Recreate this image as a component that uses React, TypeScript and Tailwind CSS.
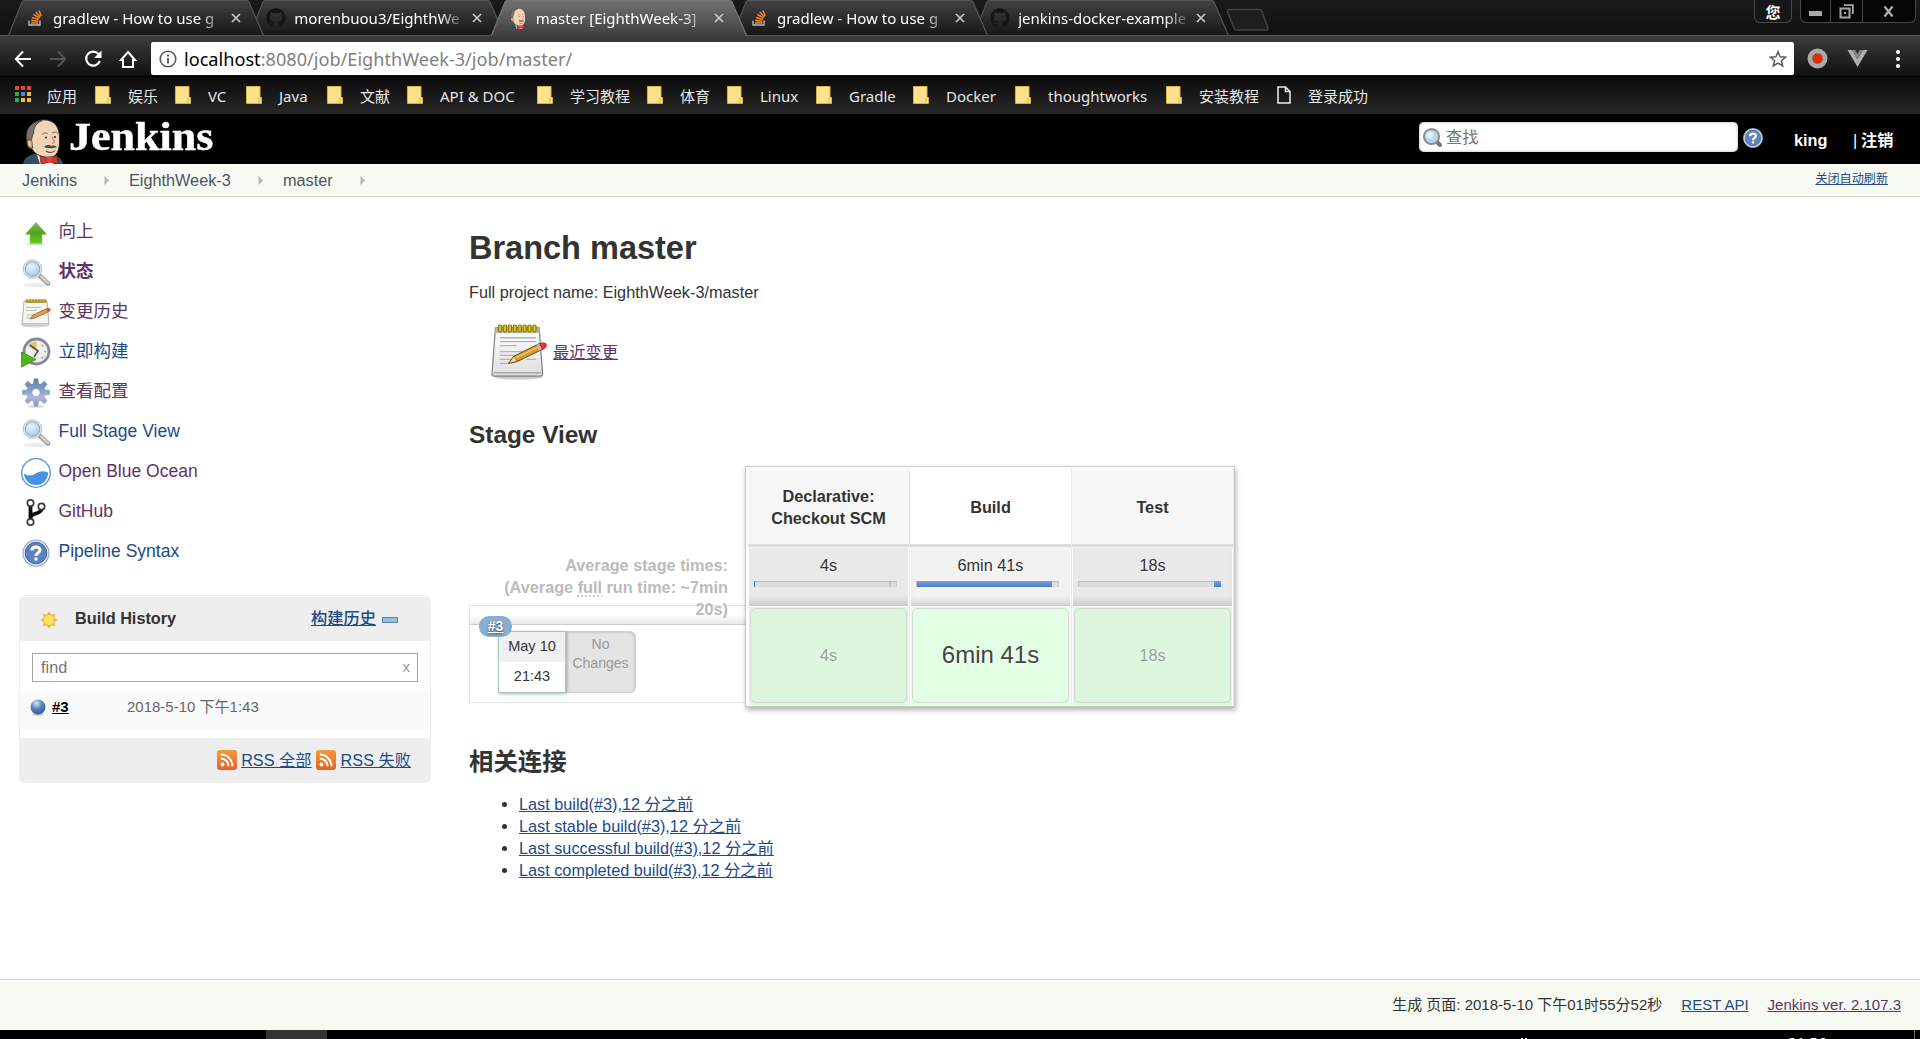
import React from "react";
import { FaGithub } from "react-icons/fa";

const ARIAL = "font-['Liberation_Sans','Noto_Sans_CJK_SC',sans-serif]";
const UI = "font-['Noto_Sans','Noto_Sans_CJK_SC',sans-serif]";

function Butler({ className }: { className?: string }) {
  return (
    <svg className={className} viewBox="0 0 40 45" preserveAspectRatio="none">
      <path d="M0 45 C1 39 5 37 11 35 L30 36 C36 38 39 40 40 45 Z" fill="#335061" />
      <path d="M13 33 L17 45 L30 45 L31 35 Z" fill="#f4f1ec" />
      <path d="M4 24 C1 11 9 1 21 0.8 C32 0.8 37 9 36.500 20 C37 31 34 38 27 38 C20 39 12 36 9 30 C6 30 4 27 4 24 Z" fill="#f0d6b7" stroke="#2b2420" strokeWidth="1" />
      <path d="M4 22 C1 10 9 2 19 1.500 C12 5 11 9 10.500 14 C9 17 9 20 8 22 Z" fill="#77736c" stroke="#2b2420" strokeWidth="0.7" />
      <path d="M4 22 C7 19 10 22 9 26 L10 29 C6 29 4 27 4 22 Z" fill="#e3bd95" stroke="#3a2c24" strokeWidth="0.8" />
      <path d="M19 16 C20 13.500 24 13.500 25 15 M29 14 C31 12.500 34 13 35 14.500" fill="none" stroke="#7a6250" strokeWidth="0.9" />
      <circle cx="23" cy="18.500" r="1" fill="#33251d" />
      <circle cx="32" cy="18" r="1" fill="#33251d" />
      <path d="M29 18 C31 22 33 24 29 24.500" fill="none" stroke="#b08056" strokeWidth="1.1" />
      <path d="M21 28 C24 25 27 26 28.500 27 C31 26 33 27 34 28 C31 29.500 24 30 21 28 Z" fill="#5c4b40" />
      <path d="M23 32 C26 34 30 34 32 31.500" fill="none" stroke="#6d3f33" strokeWidth="1.1" />
      <path d="M17 37 L26 40 L34 36.500 L35 45 L27 43 L18 45 Z" fill="#d33833" stroke="#7c1512" strokeWidth="0.7" />
      <rect x="24.500" y="38.500" width="4" height="5" fill="#ef3d3a" />
    </svg>
  );
}

function StackIcon() {
  return (
    <svg className="h-[16px] w-[14px]" viewBox="0 0 14 16">
      <path d="M1 10.500 V15 H12 V10.500" fill="none" stroke="#b9babb" strokeWidth="1.400" />
      <g stroke="#f48024" strokeWidth="1.600">
        <path d="M3 13 H10.300" />
        <path d="M3.200 10.400 L10.400 11.200" />
        <path d="M3.900 7.500 L10.800 9.400" />
        <path d="M5.400 4.500 L11.500 8" />
        <path d="M7.800 2 L12.300 7" />
        <path d="M11 0.500 L13.200 6" />
      </g>
    </svg>
  );
}

type TabProps = { title: string; kind: string; active?: boolean; z: string };

function Tab({ title, kind, active, z }: TabProps) {
  return (
    <div className={`relative -mr-[14.700px] h-[36px] w-[256px] shrink-0 ${z}`}>
      <svg className="absolute inset-0 h-full w-full" viewBox="0 0 256 36">
        <defs>
          <linearGradient id={active ? "tabOn" : "tabOff"} x1="0" y1="0" x2="0" y2="1">
            <stop offset="0" stopColor={active ? "#727272" : "#414141"} />
            <stop offset="1" stopColor={active ? "#3f3f3f" : "#161616"} />
          </linearGradient>
        </defs>
        <path
          d="M0 36 L14 2 Q15 0.500 17 0.500 H238 Q240 0.500 241 2 L256 36 Z"
          fill={active ? "url(#tabOn)" : "url(#tabOff)"}
        />
        <path
          d="M0.500 35.500 L14 2 Q15 0.500 17 0.500 H238 Q240 0.500 241 2 L255.500 35.500"
          fill="none"
          stroke={active ? "#777" : "#555"}
          strokeWidth="1.200"
        />
        {!active && <path d="M0 35.500 H256" stroke="#555" />}
      </svg>
      <div className="relative flex h-[36px] items-center">
        <div className="ml-[17px] flex w-[20px] justify-center">
          {kind === "so" && <StackIcon />}
          {kind === "gh" && <FaGithub className="h-[20px] w-[20px] text-[#151515]" />}
          {kind === "jk" && <Butler className="h-[21px] w-[18px]" />}
        </div>
        <div
          className={`ml-[8px] w-[170px] text-[15px] leading-[36px] whitespace-nowrap text-white [mask-image:linear-gradient(to_right,black_86%,transparent_102%)] ${UI}`}
        >
          {title}
        </div>
        <svg className="ml-[8px] h-[10px] w-[10px]" viewBox="0 0 10 10">
          <path d="M1 1 L9 9 M9 1 L1 9" stroke="#c9c9c9" strokeWidth="1.700" />
        </svg>
      </div>
    </div>
  );
}

function TabStrip() {
  return (
    <div className="flex h-[36px] shrink-0 items-start bg-linear-to-b from-[#1a1a1a] to-[#101010] pl-[8px] shadow-[inset_0_-1px_0_#555]">
      <Tab title="gradlew - How to use g" kind="so" z="z-[4]" />
      <Tab title="morenbuou3/EighthWe" kind="gh" z="z-[3]" />
      <Tab title="master [EighthWeek-3]" kind="jk" active z="z-[6]" />
      <Tab title="gradlew - How to use g" kind="so" z="z-[2]" />
      <Tab title="jenkins-docker-example" kind="gh" z="z-[1]" />
      <svg className="mt-[8px] ml-[11px] h-[24px] w-[44px]" viewBox="0 0 44 24">
        <path d="M3 1.500 H33 Q35 1.500 36 3.500 L42 20 Q42.500 22 40 22 H11 Q9 22 8 20 L1.500 4 Q1 1.500 3 1.500 Z" fill="#1e1e1e" stroke="#444" strokeWidth="1.400" />
      </svg>
      <div className="flex-1" />
      <div className={`flex h-[23px] w-[38px] items-center justify-center rounded-b-[6px] border border-t-0 border-[#484848] bg-[#161616] pt-[2px] text-[15px] font-bold text-white ${UI}`}>
        <span className="leading-[20px]">您</span>
      </div>
      <div className="mr-[4px] ml-[8px] flex h-[23px] w-[116px] rounded-b-[6px] border border-t-0 border-[#484848] bg-[#050505]">
        <div className="flex w-[30px] items-center justify-center border-r border-[#484848]">
          <div className="mt-[4px] h-[5px] w-[13px] bg-[#a8a8a8]" />
        </div>
        <div className="flex w-[32px] items-center justify-center border-r border-[#484848]">
          <svg className="h-[15px] w-[15px]" viewBox="0 0 15 15">
            <path d="M5 1.200 H13.800 V10" fill="none" stroke="#a8a8a8" strokeWidth="1.800" />
            <rect x="1.500" y="4.500" width="9" height="9" fill="none" stroke="#a8a8a8" strokeWidth="2" />
            <rect x="5" y="8" width="2" height="2" fill="#a8a8a8" />
          </svg>
        </div>
        <div className="flex flex-1 items-center justify-center pr-[2px]">
          <svg className="h-[11px] w-[11px]" viewBox="0 0 11 11">
            <path d="M1.500 0.500 L9.500 10.500 M9.500 0.500 L1.500 10.500" stroke="#b0b0b0" strokeWidth="2.200" />
          </svg>
        </div>
      </div>
    </div>
  );
}

function Toolbar() {
  return (
    <div className="flex h-[40px] shrink-0 items-start bg-linear-to-b from-[#3d3d3d] to-[#111] pt-[6px]">
      <div className="flex h-[34px] w-[151px] items-center pl-[14px]">
        <svg className="h-[18px] w-[18px]" viewBox="0 0 18 18" fill="none" stroke="#fff" strokeWidth="2">
          <path d="M17 9 H2 M9 1.500 L1.800 9 L9 16.500" />
        </svg>
        <svg className="ml-[17px] h-[18px] w-[18px]" viewBox="0 0 18 18" fill="none" stroke="#555" strokeWidth="2">
          <path d="M1 9 H16 M9 1.500 L16.200 9 L9 16.500" />
        </svg>
        <svg className="ml-[17px] h-[18px] w-[19px]" viewBox="0 0 19 18">
          <path d="M14.500 4 A7 7 0 1 0 15.800 11" fill="none" stroke="#fff" strokeWidth="2.200" />
          <path d="M17.500 0.500 V8 H10 Z" fill="#fff" />
        </svg>
        <svg className="ml-[16px] h-[19px] w-[18px]" viewBox="0 0 18 19">
          <path d="M9 2 L16 10 H14 V17 H4 V10 H2 Z" fill="none" stroke="#fff" strokeWidth="2" />
        </svg>
      </div>
      <div className="flex h-[33px] w-[1643px] items-center rounded-[2px] bg-white pr-[7px] pl-[8px]">
        <svg className="h-[18px] w-[18px]" viewBox="0 0 18 18">
          <circle cx="9" cy="9" r="7.800" fill="none" stroke="#5a5a5a" strokeWidth="1.600" />
          <path d="M9 8 V13.500 M9 4.500 V6.500" stroke="#5a5a5a" strokeWidth="1.900" />
        </svg>
        <div className={`ml-[7px] flex-1 text-[18.150px] leading-[32px] text-[#808080] ${UI}`}>
          <span className="text-black">localhost</span>:8080/job/EighthWeek-3/job/master/
        </div>
        <svg className="h-[18px] w-[18px]" viewBox="0 0 18 18">
          <path d="M9 1.800 L11.100 6.700 L16.500 7.200 L12.400 10.700 L13.700 16 L9 13.200 L4.300 16 L5.600 10.700 L1.500 7.200 L6.900 6.700 Z" fill="none" stroke="#5a5a5a" strokeWidth="1.500" />
        </svg>
      </div>
      <div className="flex h-[33px] flex-1 items-center pl-[13px]">
        <svg className="h-[21px] w-[21px]" viewBox="0 0 21 21">
          <circle cx="10.500" cy="10.500" r="10" fill="#aaa" />
          <circle cx="10.500" cy="10.500" r="5.300" fill="#d9300f" />
        </svg>
        <svg className="ml-[19px] h-[17px] w-[21px]" viewBox="0 0 21 17">
          <path d="M0.500 0 H5 L10.500 9.500 L16 0 H20.500 L10.500 17 Z" fill="#b0b0b0" />
          <path d="M5 0 H8.300 L10.500 4 L12.700 0 H16 L10.500 9.500 Z" fill="#858585" />
        </svg>
        <div className="ml-[28px] flex flex-col gap-[3px]">
          <div className="h-[4px] w-[4px] rounded-full bg-white" />
          <div className="h-[4px] w-[4px] rounded-full bg-white" />
          <div className="h-[4px] w-[4px] rounded-full bg-white" />
        </div>
      </div>
    </div>
  );
}

const bookmarks = [
  { label: "娱乐", width: "w-[80px]" },
  { label: "VC", width: "w-[71px]" },
  { label: "Java", width: "w-[81px]" },
  { label: "文献", width: "w-[80px]" },
  { label: "API & DOC", width: "w-[130px]" },
  { label: "学习教程", width: "w-[110px]" },
  { label: "体育", width: "w-[80px]" },
  { label: "Linux", width: "w-[89px]" },
  { label: "Gradle", width: "w-[97px]" },
  { label: "Docker", width: "w-[102px]" },
  { label: "thoughtworks", width: "w-[151px]" },
  { label: "安装教程", width: "w-[111px]" },
];

const appDots = ["#e8453c", "#e8453c", "#e8453c", "#3aa757", "#4688f1", "#f9bb2d", "#3aa757", "#f9bb2d", "#f9bb2d"];

function Bookmarks() {
  return (
    <div className={`flex h-[38px] shrink-0 items-center border-t border-black bg-linear-to-b from-[#0c0c0c] to-[#272727] pl-[15px] text-[15px] leading-[36px] whitespace-nowrap text-[#e6e6e6] ${UI}`}>
      <div className="flex w-[80px] items-center">
        <div className="mb-[3px] grid grid-cols-3 gap-[2px]">
          {appDots.map((c, i) => (
            <div key={i} className="h-[4px] w-[4px]" style={{ backgroundColor: c }} />
          ))}
        </div>
        <span className="ml-[16px]">应用</span>
      </div>
      {bookmarks.map((b) => (
        <div key={b.label} className={`flex items-center ${b.width}`}>
          <svg className="mb-[2px] h-[18px] w-[16px] shrink-0" viewBox="0 0 16 18">
            <path d="M0.500 0.500 H14 V11.500 H15.500 V17.500 H0.500 Z" fill="#ffe28a" stroke="#d9b23c" />
            <path d="M13 12 V17" stroke="#d9b23c" />
          </svg>
          <span className="ml-[17px]">{b.label}</span>
        </div>
      ))}
      <svg className="mb-[2px] h-[18px] w-[14px]" viewBox="0 0 14 18">
        <path d="M1 1 H8.500 L13 5.500 V17 H1 Z M8.500 1 V5.500 H13" fill="none" stroke="#eee" strokeWidth="1.500" />
      </svg>
      <span className="ml-[17px]">登录成功</span>
    </div>
  );
}

function Magnifier({ className }: { className?: string }) {
  return (
    <svg className={className} viewBox="0 0 30 30">
      <defs>
        <radialGradient id="lens" cx="0.4" cy="0.35" r="0.8">
          <stop offset="0" stopColor="#e9f3fc" />
          <stop offset="1" stopColor="#9dc2ea" />
        </radialGradient>
      </defs>
      <ellipse cx="15" cy="27" rx="12" ry="2" fill="#000" opacity="0.08" />
      <path d="M19 18 L27 25.500" stroke="#9a9a9a" strokeWidth="4.500" strokeLinecap="round" />
      <path d="M20 18.500 L27 25" stroke="#d0d0d0" strokeWidth="2.500" strokeLinecap="round" />
      <circle cx="11.500" cy="11" r="9.300" fill="#e9e9e9" stroke="#c0c0c0" />
      <circle cx="11.500" cy="11" r="7.300" fill="url(#lens)" stroke="#7ba3d3" />
    </svg>
  );
}

function Help({ className }: { className?: string }) {
  return (
    <svg className={className} viewBox="0 0 30 30">
      <ellipse cx="15" cy="28" rx="9" ry="1.500" fill="#000" opacity="0.12" />
      <circle cx="15" cy="15" r="13" fill="#e4ebf4" stroke="#8ea9cb" strokeWidth="1.200" />
      <circle cx="15" cy="15" r="10.800" fill="#5c84ba" stroke="#41699f" />
      <path d="M11 12.500 C11 8 19 8 19 12 C19 15 15 15 15 18" fill="none" stroke="#fff" strokeWidth="3" />
      <rect x="13.500" y="19.500" width="3" height="3" fill="#fff" />
    </svg>
  );
}

function JenkinsHeader() {
  return (
    <div className="flex h-[50px] shrink-0 items-start bg-black">
      <Butler className="mt-[5px] ml-[23px] h-[45px] w-[40px]" />
      <div className="ml-[6px] w-[146px] origin-left scale-x-[1.100] text-[40px] leading-[46px] font-bold text-white font-['Liberation_Serif',serif] [-webkit-text-stroke:0.500px_white]">Jenkins</div>
      <div className="flex-1" />
      <div className="mt-[8px] flex h-[30px] w-[319px] items-center rounded-[5px] bg-white pl-[3px] shadow-[inset_0_0_3px_#aaa]">
        <svg className="h-[21px] w-[21px]" viewBox="0 0 21 21">
          <path d="M14 14 L18 18" stroke="#777" strokeWidth="4" strokeLinecap="round" />
          <circle cx="9.500" cy="9.500" r="7.600" fill="#b8d5f2" stroke="#8c8c8c" strokeWidth="2" />
          <circle cx="8" cy="8" r="3.500" fill="#e2effb" />
        </svg>
        <span className={`ml-[3px] text-[16.250px] leading-[28px] text-[#757575] ${ARIAL}`}>查找</span>
      </div>
      <Help className="mt-[13px] ml-[4px] h-[22px] w-[22px]" />
      <div className={`mt-[15px] ml-[30px] flex w-[126px] text-[16.250px] leading-[22px] font-bold text-white ${ARIAL}`}>
        <span className="w-[59px]">king</span>
        <span className="w-[8px] font-normal">|</span>
        <span>注销</span>
      </div>
    </div>
  );
}

function Crumb({ label, width }: { label: string; width: string }) {
  return (
    <div className={`flex items-center justify-between ${width}`}>
      <span>{label}</span>
      <svg className="h-[9px] w-[5px]" viewBox="0 0 5 9">
        <path d="M0.500 0 L5 4.500 L0.500 9 Z" fill="#b5b8b1" />
      </svg>
    </div>
  );
}

function Breadcrumbs() {
  return (
    <div className={`flex h-[33px] shrink-0 items-center border-b border-[#d3d7cf] bg-[#f6faf2] pl-[22px] text-[16.250px] leading-[32px] text-[#4d545d] ${ARIAL}`}>
      <Crumb label="Jenkins" width="w-[87px]" />
      <Crumb label="EighthWeek-3" width="ml-[20px] w-[134px]" />
      <Crumb label="master" width="ml-[20px] w-[82px]" />
      <div className="flex-1" />
      <span className="mr-[32px] pb-[2px] text-[12.100px] leading-[28px] text-[#204a87] underline">关闭自动刷新</span>
    </div>
  );
}

function UpIcon() {
  return (
    <svg className="h-[30px] w-[30px]" viewBox="0 0 30 30">
      <defs>
        <linearGradient id="up" x1="0" y1="0" x2="0" y2="1">
          <stop offset="0" stopColor="#8ab872" />
          <stop offset="0.5" stopColor="#4ba81c" />
          <stop offset="1" stopColor="#66cc14" />
        </linearGradient>
      </defs>
      <ellipse cx="15" cy="26" rx="9" ry="1.500" fill="#000" opacity="0.15" />
      <path d="M15 4 L26 16.500 H21 V25.500 H9 V16.500 H4 Z" fill="url(#up)" />
    </svg>
  );
}

function Notepad({ className }: { className?: string }) {
  return (
    <svg className={className} viewBox="0 0 58 58">
      <defs>
        <linearGradient id="paper" x1="0" y1="0" x2="0" y2="1">
          <stop offset="0" stopColor="#ffffff" />
          <stop offset="1" stopColor="#dedede" />
        </linearGradient>
      </defs>
      <ellipse cx="28" cy="54.500" rx="24" ry="2" fill="#000" opacity="0.2" />
      <path d="M4.500 4 H49 L52.500 51 Q52.500 53 50.500 53 H3 Q1 53 1 51 Z" fill="url(#paper)" stroke="#7d7f7a" strokeWidth="1.200" />
      <path d="M4.500 4.500 H49 L49.500 9.500 H4 Z" fill="#b9b9b7" />
      <path d="M3 49.500 H51" stroke="#a9a9a9" strokeWidth="1.500" />
      <g stroke="#8f7a08" strokeWidth="1.200" fill="#d8c021">
        {[8, 13, 18, 23, 28, 33, 38, 43].map((x) => (
          <rect key={x} x={x - 0.5} y="1" width="3.400" height="7" rx="1.500" />
        ))}
      </g>
      <path d="M9 14 H46 M9 18 H46 M9 22 H26 M9 28 H40 M9 32 H36 M9 36 H28 M9 40 H18 M36 36 H46" stroke="#b3b3b3" strokeWidth="1.300" />
      <path d="M18 40 L23 33 L49 20 L54 22 L54 25 L27 38 Z" fill="#d9992f" stroke="#6b4a12" strokeWidth="1" />
      <path d="M18 40 L23 33 L27 38 Z" fill="#f0d9a8" stroke="#6b4a12" strokeWidth="0.800" />
      <path d="M24 35 L50 22.500" stroke="#f3c56d" strokeWidth="1.500" />
      <path d="M48 20.500 L51 19.300 Q56 18.500 56.500 21.500 Q56.500 24 53 25.500 L50 27 Z" fill="#e23434" stroke="#8c1f1f" strokeWidth="0.600" />
      <path d="M46.500 21.200 L49 20 L51.500 26 L49 27.300 Z" fill="#bdbdbd" />
    </svg>
  );
}

function SmallNotepad() {
  return (
    <svg className="h-[30px] w-[30px]" viewBox="0 0 30 30">
      <ellipse cx="14" cy="28" rx="13" ry="1.500" fill="#000" opacity="0.15" />
      <path d="M3 3 H26 L28 27 H1 Z" fill="#f4f4f2" stroke="#b2b2af" />
      <path d="M4.500 1.500 H25.500 V5 H4.500 Z" fill="#c3ac45" />
      <path d="M6 1 V5 M9 1 V5 M12 1 V5 M15 1 V5 M18 1 V5 M21 1 V5 M24 1 V5" stroke="#8d7a2a" strokeWidth="0.800" />
      <path d="M5 9.500 H20 M5 12.500 H16 M5 17 H13 M5 20 H11 M1.500 25.500 H27.500" stroke="#c2c2c2" strokeWidth="1.200" />
      <path d="M9 21 L12 17 L26 10.500 L28 13.500 L14 20 Z" fill="#dba14b" stroke="#8a5c20" strokeWidth="0.700" />
      <path d="M25 11 L28 10 Q30.500 11 29 13 L27 14 Z" fill="#e04438" />
    </svg>
  );
}

function ClockIcon() {
  return (
    <svg className="h-[32px] w-[30px]" viewBox="0 0 30 32">
      <circle cx="15.500" cy="14.500" r="12.500" fill="#eeeeea" stroke="#89859f" strokeWidth="2.800" />
      <path d="M15.500 14.500 L7 9 Q10 4.500 15.500 4.500 Z" fill="#e3c65c" />
      <path d="M9 8 L17 14 L13 20" fill="none" stroke="#555" strokeWidth="1.600" />
      <g fill="#999">
        <circle cx="24" cy="14.500" r="0.900" />
        <circle cx="21.500" cy="20.500" r="0.900" />
        <circle cx="21.500" cy="8.500" r="0.900" />
      </g>
      <path d="M0.500 15 L15 22.500 L0.500 30 Z" fill="#4fb51c" stroke="#3a8b14" strokeWidth="0.800" />
    </svg>
  );
}

function GearIcon() {
  return (
    <svg className="h-[30px] w-[30px]" viewBox="0 0 30 30">
      <defs>
        <linearGradient id="gear" x1="0" y1="0" x2="0" y2="30" gradientUnits="userSpaceOnUse">
          <stop offset="0" stopColor="#5e7fae" />
          <stop offset="0.35" stopColor="#7f9ac4" />
          <stop offset="0.65" stopColor="#b1b3da" />
          <stop offset="1" stopColor="#8d8bb5" />
        </linearGradient>
        <mask id="gearShape">
          <g fill="#fff">
            {[0, 45, 90, 135, 180, 225, 270, 315].map((a) => (
              <path key={a} d="M11.800 8 L12.800 0.500 H17.200 L18.200 8 Z" transform={`rotate(${a} 15 14.500)`} />
            ))}
            <circle cx="15" cy="14.500" r="9.500" />
          </g>
          <circle cx="15" cy="14.500" r="3.600" fill="#000" />
        </mask>
      </defs>
      <ellipse cx="15" cy="28.500" rx="8" ry="1.300" fill="#000" opacity="0.15" />
      <rect width="30" height="30" fill="url(#gear)" mask="url(#gearShape)" />
    </svg>
  );
}

function OceanIcon() {
  return (
    <svg className="h-[30px] w-[30px]" viewBox="0 0 30 30">
      <circle cx="15" cy="15" r="14.300" fill="#fff" stroke="#4a90e2" strokeWidth="1.300" />
      <path d="M3 15.500 C8 18.500 11 18 15 15.300 C19 12.800 23 12.500 27 14.500 A12 12 0 0 1 3 15.500 Z" fill="#4a90e2" />
    </svg>
  );
}

function BranchIcon() {
  return (
    <svg className="h-[30px] w-[30px]" viewBox="0 0 30 30">
      <path d="M9.500 7 V23 M20.500 10.500 C20.500 17 10 14 9.500 20" fill="none" stroke="#0b0b0b" strokeWidth="3.800" />
      <g fill="#fff" stroke="#3c3c3c" strokeWidth="1.700">
        <circle cx="9.500" cy="5" r="3.200" />
        <circle cx="20.500" cy="8.500" r="3.200" />
        <circle cx="9.500" cy="24" r="3.200" />
      </g>
    </svg>
  );
}

const VISITED = "text-[#5c3566]";
const LINK = "text-[#204a87]";

const tasks = [
  { label: "向上", icon: <UpIcon />, style: VISITED },
  { label: "状态", icon: <Magnifier className="h-[30px] w-[30px]" />, style: `${VISITED} font-bold` },
  { label: "变更历史", icon: <SmallNotepad />, style: VISITED },
  { label: "立即构建", icon: <ClockIcon />, style: LINK },
  { label: "查看配置", icon: <GearIcon />, style: VISITED },
  { label: "Full Stage View", icon: <Magnifier className="h-[30px] w-[30px]" />, style: LINK },
  { label: "Open Blue Ocean", icon: <OceanIcon />, style: VISITED },
  { label: "GitHub", icon: <BranchIcon />, style: VISITED },
  { label: "Pipeline Syntax", icon: <Help className="h-[30px] w-[30px]" />, style: LINK },
];

function Rss() {
  return (
    <svg className="h-[20px] w-[20px]" viewBox="0 0 20 20">
      <defs>
        <linearGradient id="rss" x1="0" y1="0" x2="0" y2="1">
          <stop offset="0" stopColor="#f49a3c" />
          <stop offset="1" stopColor="#e2632c" />
        </linearGradient>
      </defs>
      <rect width="20" height="20" rx="3" fill="url(#rss)" />
      <circle cx="5.500" cy="14.500" r="1.900" fill="#fff" />
      <path d="M3.800 8.500 A7.700 7.700 0 0 1 11.500 16.200 M3.800 4.500 A11.700 11.700 0 0 1 15.500 16.200" fill="none" stroke="#fff" strokeWidth="2" />
    </svg>
  );
}

function BuildHistory() {
  return (
    <div className="mt-[23px] h-[188px] w-[412px] overflow-hidden rounded-[6px] border border-[#eee] bg-white">
      <div className="mt-px flex h-[44px] items-center rounded-t-[5px] bg-[#eee] pl-[20px]">
        <svg className="mt-[2px] h-[18px] w-[18px]" viewBox="0 0 18 18">
          <g fill="#f2b04a">
            {[0, 45, 90, 135, 180, 225, 270, 315].map((a) => (
              <path key={a} d="M7 4 L9 0 L11 4 Z" transform={`rotate(${a} 9 9)`} />
            ))}
          </g>
          <circle cx="9" cy="9" r="5.500" fill="#fbe659" stroke="#f0b040" />
        </svg>
        <span className="ml-[17px] w-[236px] pb-[2px] text-[16.250px] font-bold text-[#333]">Build History</span>
        <span className="pb-[2px] text-[16.250px] font-medium text-[#204a87] underline">构建历史</span>
        <span className="mt-[2px] ml-[6px] h-[6px] w-[16px] border border-[#5581b8] bg-[#9cbce0]" />
      </div>
      <div className="mx-[12px] mt-[12px] flex h-[29px] items-center justify-between border border-[#a5a5a5] pr-[7px] pl-[8px]">
        <span className="text-[16.250px] text-[#757575]">find</span>
        <span className="text-[15px] text-[#999]">x</span>
      </div>
      <div className="mt-[9px] flex h-[39px] items-start bg-[#fafafa] pt-[7px] pl-[10px]">
        <svg className="mt-px h-[17px] w-[16px]" viewBox="0 0 16 17">
          <defs>
            <radialGradient id="ball" cx="0.4" cy="0.25" r="0.8">
              <stop offset="0" stopColor="#d5e2f2" />
              <stop offset="0.5" stopColor="#5580b8" />
              <stop offset="1" stopColor="#2c5a9c" />
            </radialGradient>
          </defs>
          <ellipse cx="8" cy="15.500" rx="6" ry="1.300" fill="#000" opacity="0.2" />
          <circle cx="8" cy="8" r="7.500" fill="url(#ball)" />
        </svg>
        <span className="ml-[6px] w-[75px] text-[15px] leading-[18px] font-bold text-black underline">#3</span>
        <span className="text-[15px] leading-[18px] text-[#666]">2018-5-10 下午1:43</span>
      </div>
      <div className="mt-[8px] flex h-[44px] items-center justify-end bg-[#eee] pr-[19px] pb-px text-[16.250px] text-[#204a87]">
        <Rss />
        <span className="mr-[4px] ml-[4px] leading-[22px] underline">RSS 全部</span>
        <Rss />
        <span className="ml-[5px] leading-[22px] underline">RSS 失败</span>
      </div>
    </div>
  );
}

const stages = [
  {
    name: ["Declarative:", "Checkout SCM"], time: "4s", dim: true,
    bar: <><div className="w-px bg-[#3875d7]" /><div className="flex-1" /><div className="w-[2px] bg-black/10" /><div className="w-[6px]" /></>,
  },
  {
    name: ["Build"], time: "6min 41s", dim: false,
    bar: <><div className="w-px" /><div className="w-[135px] bg-linear-to-b from-[#7ba3d3] to-[#4a7cc9]" /></>,
  },
  {
    name: ["Test"], time: "18s", dim: true,
    bar: <><div className="flex-1" /><div className="w-[7px] bg-linear-to-b from-[#7ba3d3] to-[#4a7cc9]" /></>,
  },
];

function StageTable() {
  return (
    <div className="flex h-[241px] w-[490px] border border-[#c8c8c8] bg-white pt-px pr-px pb-px pl-[2px] shadow-[1px_3px_5px_rgba(0,0,0,0.3)]">
      {stages.map((s) => (
        <div key={s.time} className="flex w-[162px] shrink-0 flex-col border-r border-[#e8e8e8]">
          <div className={`flex h-[76px] flex-col items-center justify-center pt-[2px] text-center font-bold text-[#333] ${s.dim ? "bg-[#f7f7f7]" : "bg-white"}`}>
            {s.name.map((n) => (
              <div key={n}>{n}</div>
            ))}
          </div>
          <div className="h-[3px] bg-[#dcdcdc]" />
          <div className="h-px bg-[#f4f4f4]" />
          <div className={`mx-px h-[58px] border-b border-[#c8c8c8] pt-[6px] text-center text-[#333] shadow-[inset_0_-8px_8px_-6px_rgba(0,0,0,0.18)] [text-shadow:1px_1px_2px_#fff] ${s.dim ? "bg-[#e9e9e9]" : "bg-[#f2f2f2]"}`}>
            <div>{s.time}</div>
            <div className="mt-[5px] ml-[5px] flex h-[6px] w-[143px] bg-[#dedede] shadow-[inset_1px_1px_1px_#bbb,inset_-1px_0_1px_#ccc]">{s.bar}</div>
          </div>
          <div className={`mx-px mt-px flex h-[98px] px-px pt-px pb-[2px] ${s.dim ? "bg-[#ddf6dd]" : "bg-[#e3ffe3]"}`}>
            <div className={`flex flex-1 items-center justify-center rounded-[6px] border border-[#d3d8d3] pb-px [text-shadow:1px_1px_2px_#fff] ${s.dim ? "text-[#93a393]" : "text-[24px] text-[#444]"}`}>
              {s.time}
            </div>
          </div>
        </div>
      ))}
    </div>
  );
}

function StageView() {
  return (
    <div className="mt-[17px] flex h-[241px] text-[16.250px] leading-[22px]">
      <div className="w-[276px] pt-[88px]">
        <div className="relative z-10 pr-[17px] text-right font-bold text-[#bbb]">
          <div>Average stage times:</div>
          <div>
            (Average <span className="underline decoration-dotted underline-offset-[3px]">full</span> run time: ~7min
          </div>
          <div>20s)</div>
        </div>
        <div className="-mt-[15px] h-[98px] border border-r-0 border-[#e3e3e3]">
          <div className="h-[19px] border-b border-[#ccc] bg-linear-to-b from-white from-50% to-[#e9e9e9]" />
          <div className="relative mt-[6px] ml-[28px] flex">
            <div className="absolute -top-[15px] -left-[19px] z-10 h-[21px] w-[33px] rounded-[10px] bg-[#8aadd2] text-center text-[14px] leading-[20px] font-bold text-white underline [text-shadow:0_1px_2px_#335]">
              #3
            </div>
            <div className="z-[1] h-[62px] w-[68px] border border-[#a3cbb5] bg-white text-center text-[14.500px] text-[#333] shadow-[1px_1px_3px_rgba(0,0,0,0.3)]">
              <div className="h-[30px] bg-[#f0f0f0] leading-[29px]">May 10</div>
              <div className="leading-[28px]">21:43</div>
            </div>
            <div className="h-[62px] w-[70px] rounded-r-[6px] border border-l-0 border-[#cfcfcf] bg-[#e4e4e4] pt-[3px] text-center text-[14px] leading-[19px] text-[#999] shadow-[inset_-1px_1px_2px_#ccc]">
              No
              <br />
              Changes
            </div>
          </div>
        </div>
      </div>
      <StageTable />
    </div>
  );
}

const links = ["Last build(#3),12 分之前", "Last stable build(#3),12 分之前", "Last successful build(#3),12 分之前", "Last completed build(#3),12 分之前"];

export default function App() {
  return (
    <div className="flex h-[1039px] w-[1920px] flex-col overflow-hidden bg-white">
      <TabStrip />
      <Toolbar />
      <Bookmarks />
      <JenkinsHeader />
      <Breadcrumbs />
      <div className={`flex h-[782px] shrink-0 ${ARIAL}`}>
        <div className="w-[469px] pt-[15px] pl-[19px]">
          {tasks.map((t) => (
            <div key={t.label} className="flex h-[40px] items-center pl-[2px]">
              <div className="pt-px">{t.icon}</div>
              <span className={`ml-[7.500px] pb-[2px] text-[17.500px] leading-[38px] ${t.style}`}>{t.label}</span>
            </div>
          ))}
          <BuildHistory />
        </div>
        <div className="flex-1 pt-[31px] text-[16.250px] leading-[22px] text-[#333]">
          <h1 className="text-[32.500px] leading-[40px] font-bold">Branch master</h1>
          <div className="mt-[13px]">Full project name: EighthWeek-3/master</div>
          <div className="mt-[21px] flex h-[56px] items-center pl-[22px]">
            <Notepad className="h-[57px] w-[57px]" />
            <span className="ml-[5px] text-[#5c3566] underline">最近变更</span>
          </div>
          <h2 className="mt-[41px] text-[24.400px] leading-[28px] font-bold">Stage View</h2>
          <StageView />
          <h2 className="mt-[41px] text-[24.400px] leading-[28px] font-bold">相关连接</h2>
          <ul className="mt-[17px] list-disc pl-[50px]">
            {links.map((l) => (
              <li key={l}>
                <span className="text-[#204a87] underline">{l}</span>
              </li>
            ))}
          </ul>
        </div>
      </div>
      <div className={`flex h-[51px] shrink-0 items-center justify-end border-t border-[#d3d7cf] bg-[#f6faf2] pr-[19px] text-[15px] text-[#333] ${ARIAL}`}>
        <span>生成 页面: 2018-5-10 下午01时55分52秒</span>
        <span className="ml-[19px] text-[#204a87] underline">REST API</span>
        <span className="ml-[19px] text-[#5c3566] underline">Jenkins ver. 2.107.3</span>
      </div>
      <div className={`flex h-[9px] shrink-0 overflow-hidden bg-black text-[15px] leading-[17px] text-white ${UI}`}>
        <div className="ml-[266px] h-[9px] w-[61px] bg-[#333]" />
        <div className="mt-[8px] ml-[1194px] h-px w-[2px] bg-white" />
        <div className="mt-[8px] ml-[2px] h-px w-[2px] bg-white" />
        <div className="mt-[4px] ml-[261px] w-[126px]">21:56</div>
        <div className="h-[9px] w-px bg-[#666]" />
      </div>
    </div>
  );
}
